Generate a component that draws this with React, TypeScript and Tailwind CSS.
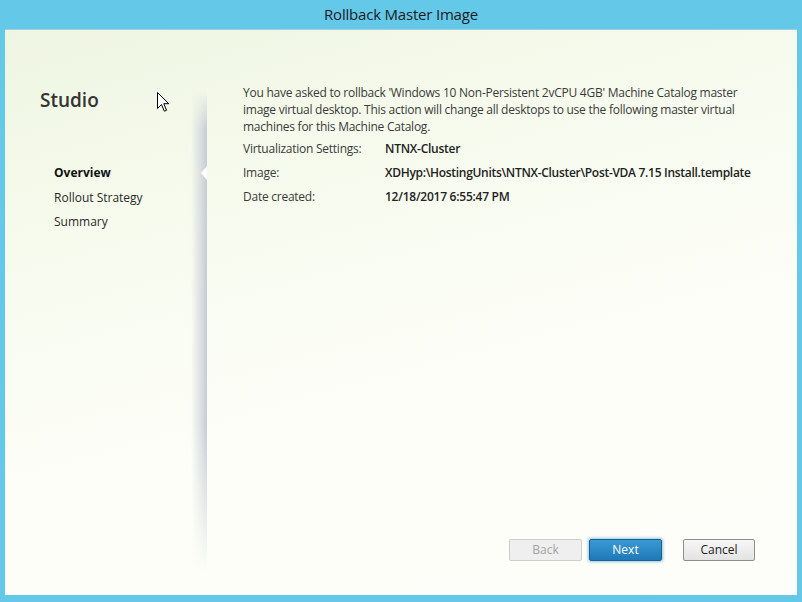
import React from "react";

const font = { fontFamily: '"Open Sans", "Noto Sans", sans-serif' };

export default function App() {
  return (
    <div
      className="w-[802px] h-[602px] bg-[#64c9e9] flex flex-col overflow-hidden"
      style={font}
    >
      <div className="h-[29px] flex items-center justify-center text-[15px] text-[#1c1c1c] tracking-[-0.2px]">
        Rollback Master Image
      </div>
      <div className="flex-1 mx-[5px] mb-[7px] flex bg-[linear-gradient(165deg,#eef5e1_0%,#f7fbee_30%,#fcfef7_60%,#fdfef9_100%)] border-t border-[#9ccfe0]">
        {/* left panel */}
        <div className="w-[202px] relative shrink-0">
          <div className="pl-[35px] pt-[58px] text-[19px] font-semibold text-[#333] leading-[24px]">
            Studio
          </div>
          <div className="pl-[49px] pt-[53px] flex flex-col text-[12px] text-[#2a2a2a] leading-[16px] gap-[8.5px]">
            <div className="font-bold text-[#111]">Overview</div>
            <div>Rollout Strategy</div>
            <div>Summary</div>
          </div>
          {/* shadow */}
          <div className="absolute right-0 top-[61px] h-[480px] w-[16px] bg-[linear-gradient(to_right,rgba(200,205,215,0)_0%,rgba(200,205,215,0.6)_60%,#c6cad5_100%)] [mask-image:linear-gradient(to_bottom,transparent_0%,black_8%,black_70%,transparent_100%)]" />
          {/* pointer */}
          <div className="absolute right-0 top-[136px] w-0 h-0 border-y-[7px] border-y-transparent border-r-[6px] border-r-white" />
          {/* cursor */}
          <svg
            className="absolute left-[152px] top-[62px]"
            width="13"
            height="21"
            viewBox="0 0 13 21"
          >
            <path
              d="M0.5 0.5 L0.5 16.5 L4.5 12.5 L7.3 19.2 L9.5 18.3 L6.8 11.7 L11.8 11.7 Z"
              fill="white"
              stroke="black"
              strokeWidth="1"
              strokeLinejoin="miter"
            />
          </svg>
        </div>
        {/* right panel */}
        <div className="flex-1 flex flex-col pl-[36px] pr-[42px] pt-[54px] pb-[34px] text-[12px] text-[#3a3a3a] tracking-[-0.25px]">
          <div className="leading-[17px]">
            You have asked to rollback 'Windows 10 Non-Persistent 2vCPU 4GB' Machine Catalog master
            <br />
            image virtual desktop. This action will change all desktops to use the following master virtual
            <br />
            machines for this Machine Catalog.
          </div>
          <div className="mt-[6px] flex flex-col gap-[8px] leading-[16px]">
            <div className="flex">
              <div className="w-[142px]">Virtualization Settings:</div>
              <div className="font-semibold text-[#222]">NTNX-Cluster</div>
            </div>
            <div className="flex">
              <div className="w-[142px]">Image:</div>
              <div className="font-semibold text-[#222] tracking-[-0.3px]">
                XDHyp:\HostingUnits\NTNX-Cluster\Post-VDA 7.15 Install.template
              </div>
            </div>
            <div className="flex">
              <div className="w-[142px]">Date created:</div>
              <div className="font-semibold text-[#222]">12/18/2017 6:55:47 PM</div>
            </div>
          </div>
          <div className="mt-auto flex justify-end tracking-normal">
            <button className="w-[73px] h-[22px] rounded-[2px] border border-[#cdcdcd] bg-[#efefef] text-[#a3a3a3] text-[12px]">
              Back
            </button>
            <button className="ml-[7px] w-[73px] h-[22px] rounded-[2px] border border-[#1f5f8f] bg-[linear-gradient(to_bottom,#3a9ad4,#1f78b8)] text-white text-[12px] shadow-[0_0_3px_1px_rgba(80,160,210,0.6)]">
              Next
            </button>
            <button className="ml-[21px] w-[72px] h-[22px] rounded-[2px] border border-[#8e8e8e] bg-[linear-gradient(to_bottom,#f7f7f7,#e3e3e3)] text-[#1e1e1e] text-[12px]">
              Cancel
            </button>
          </div>
        </div>
      </div>
    </div>
  );
}
